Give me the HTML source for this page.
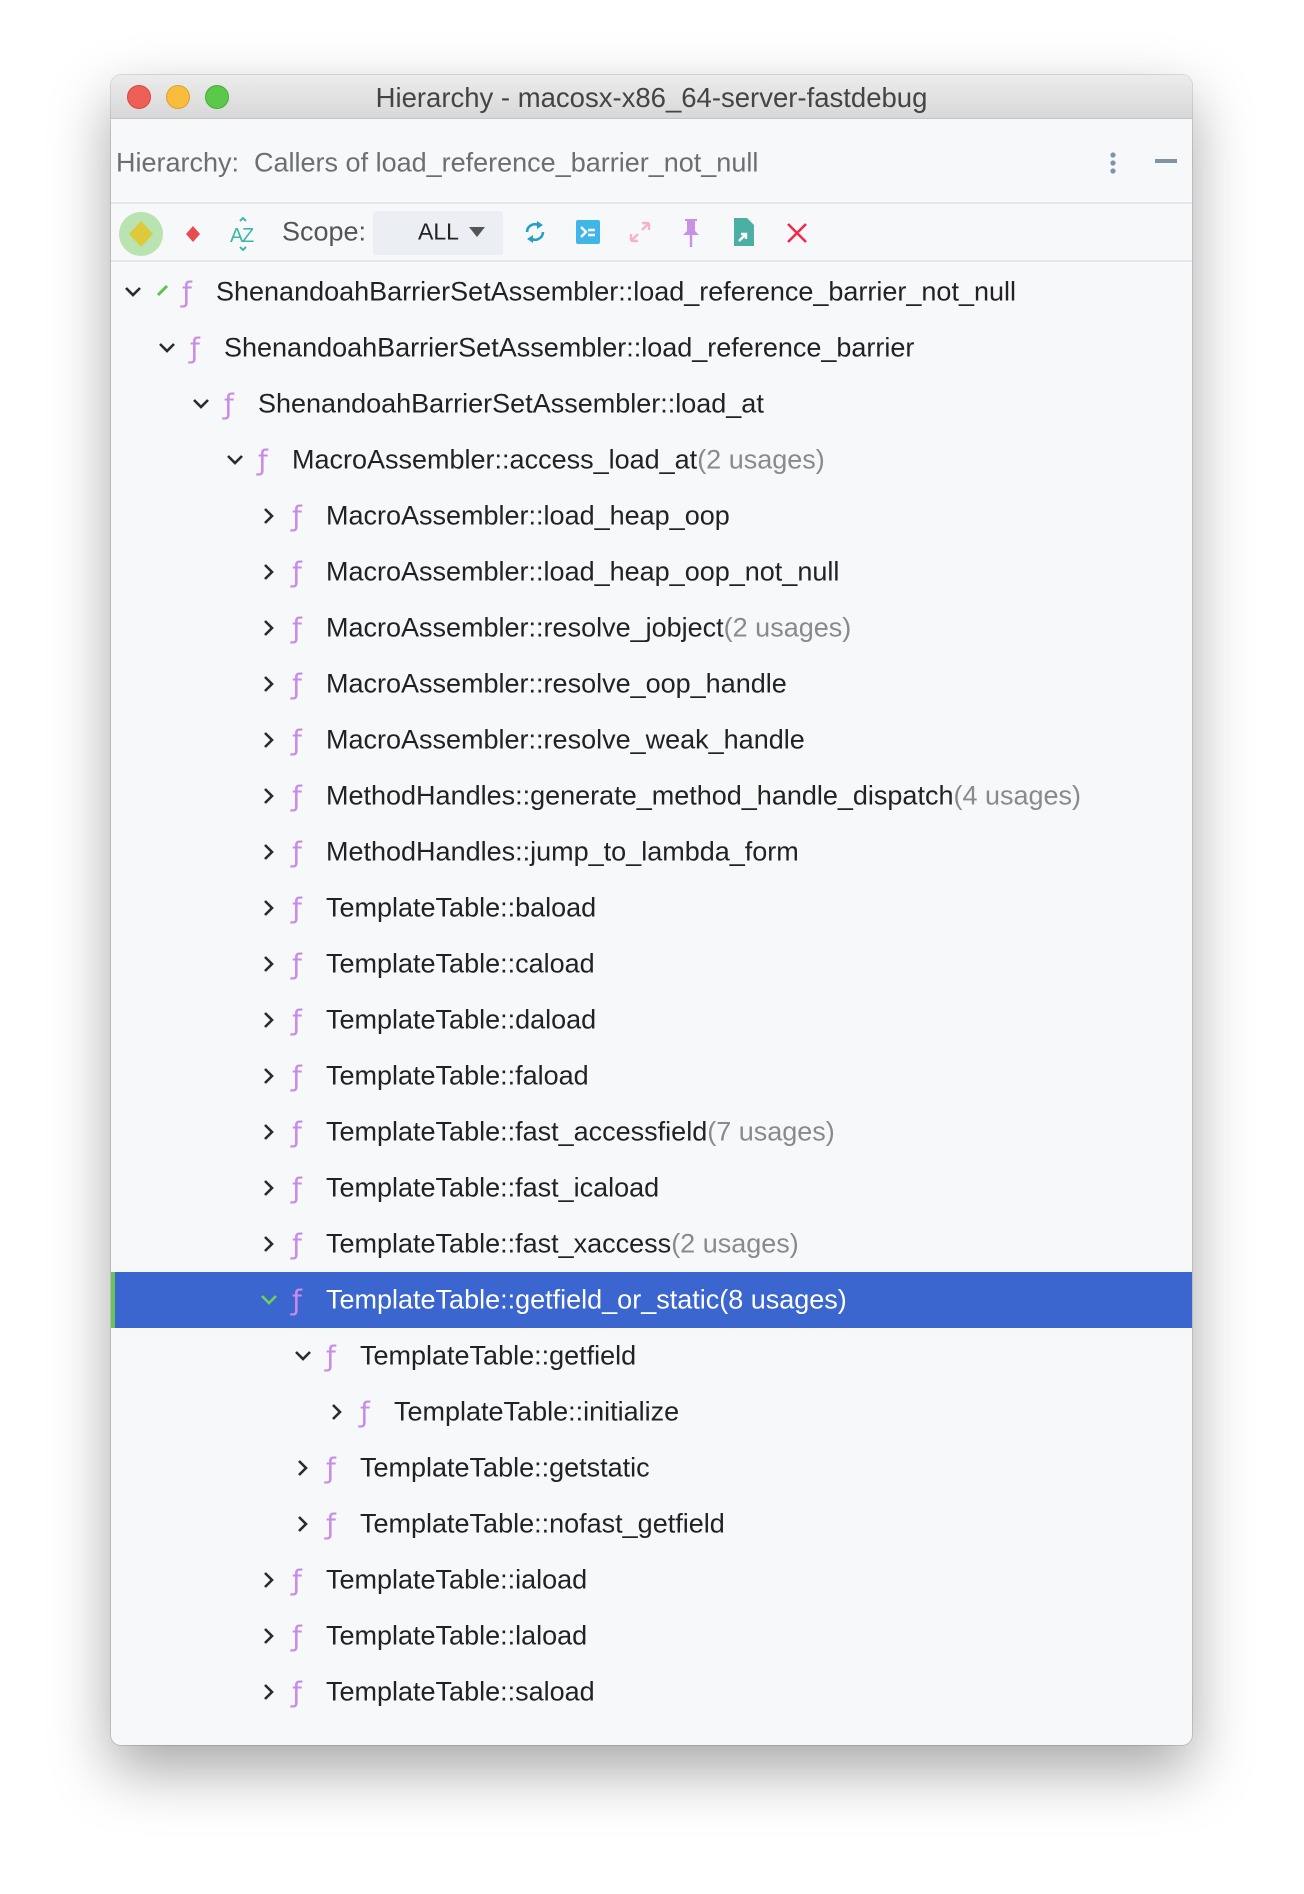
<!DOCTYPE html>
<html><head><meta charset="utf-8"><style>
*{margin:0;padding:0;box-sizing:border-box}
body{width:1304px;height:1894px;background:#fff;position:relative;font-family:"Liberation Sans",sans-serif;overflow:hidden}
.win{position:absolute;left:111px;top:75px;width:1081px;height:1670px;background:#f7f8fa;border-radius:10px;overflow:hidden;box-shadow:0 25px 60px rgba(0,0,0,.35),0 0 0 1px rgba(0,0,0,.12)}
.title{position:absolute;left:0;top:0;width:100%;height:44px;background:linear-gradient(#ececec,#d8d8d8);border-bottom:1px solid #c4c4c4;text-align:center;font-size:27.5px;line-height:46px;color:#444}
.dot{position:absolute;top:10px;width:24px;height:24px;border-radius:50%}
.hdr{position:absolute;left:5px;top:88px;font-size:27px;color:#6e6e6e;transform:translateY(-50%);white-space:nowrap}
.sep{position:absolute;left:0;width:100%;height:2px;background:#e6e7ea}
.row{position:absolute;left:0;width:100%;height:56px}
.row .t{position:absolute;top:50%;transform:translateY(-50%);font-size:27px;color:#222;white-space:nowrap}
.row .u{color:#8a8a8a}
.row .f{position:absolute;top:50%;transform:translateY(-50%);font-family:"DejaVu Sans",sans-serif;font-size:28px;color:#c98be8}
.row svg.c{position:absolute;top:50%;margin-top:-8px}
.sel{background:#3b66d0}
.sel .t{color:#fff}
.ic{position:absolute;top:157px}
</style></head><body>
<div class="win">
<div class="title">Hierarchy - macosx-x86_64-server-fastdebug
<div class="dot" style="left:16px;background:#ee5f58;border:1px solid #d4473f"></div>
<div class="dot" style="left:55px;background:#f8bd3c;border:1px solid #dca22b"></div>
<div class="dot" style="left:94px;background:#5ac84b;border:1px solid #45ad37"></div>
</div>
<div class="hdr">Hierarchy:&nbsp; Callers of load_reference_barrier_not_null</div>
<svg style="position:absolute;left:995px;top:76px" width="14" height="24"><circle cx="7" cy="4" r="2.6" fill="#7f95a6"/><circle cx="7" cy="12" r="2.6" fill="#7f95a6"/><circle cx="7" cy="20" r="2.6" fill="#7f95a6"/></svg>
<div style="position:absolute;left:1044px;top:84px;width:22px;height:4px;background:#7f95a6"></div>
<div class="sep" style="top:127px"></div>
<svg class="ic" style="left:6px;top:135px" width="48" height="48"><circle cx="24" cy="24" r="22" fill="#b9e3b0"/><path d="M24 11 L36 24 L24 37 L12 24Z" fill="#dcca3a"/></svg>
<svg class="ic" style="left:72px;top:149px" width="20" height="20"><path d="M10 2L17 10L10 18L3 10Z" fill="#e84b4b"/></svg>
<svg class="ic" style="left:118px;top:142px" width="30" height="34"><text x="1" y="25" font-family="Liberation Sans" font-size="20" fill="#3fb6a8">A</text><text x="13" y="25" font-family="Liberation Sans" font-size="20" fill="#3fb6a8">Z</text><path d="M11 4l3-3 3 3M11 30l3 3 3-3" stroke="#3fb6a8" fill="none" stroke-width="2"/></svg>
<div style="position:absolute;left:171px;top:157px;font-size:27px;color:#555;transform:translateY(-50%)">Scope:</div>
<div style="position:absolute;left:262px;top:136px;width:130px;height:44px;background:#ebeef2;border-radius:3px"></div>
<div style="position:absolute;left:307px;top:157px;font-size:23px;color:#222;transform:translateY(-50%)">ALL</div>
<svg style="position:absolute;left:357px;top:151px" width="18" height="12"><path d="M1 1H17L9 11Z" fill="#555"/></svg>
<svg style="position:absolute;left:411px;top:142px" width="26" height="30"><path d="M5 15a8 8 0 0 1 13-6" stroke="#27a0c9" stroke-width="2.6" fill="none"/><path d="M21 15a8 8 0 0 1-13 6" stroke="#27a0c9" stroke-width="2.6" fill="none"/><path d="M15 4l6 4-6 4Z M11 26l-6-4 6-4Z" fill="#27a0c9"/></svg>
<svg style="position:absolute;left:465px;top:145px" width="24" height="24"><rect width="24" height="24" rx="2" fill="#40b6e8"/><path d="M5 7l5 5-5 5" stroke="#fff" stroke-width="2.4" fill="none"/><path d="M12 10h7M12 15h7" stroke="#fff" stroke-width="2.4"/></svg>
<svg style="position:absolute;left:517px;top:145px" width="24" height="24"><path d="M3 21l7-7M21 3l-7 7M3 21v-7M3 21h7M21 3v7M21 3h-7" stroke="#f4b4c8" stroke-width="2.4" fill="none"/></svg>
<svg style="position:absolute;left:570px;top:142px" width="20" height="32"><path d="M4 2h12v2h-2v10l4 4H2l4-4V4H4Z" fill="#c990e6"/><path d="M10 18v12" stroke="#c990e6" stroke-width="2.4"/></svg>
<svg style="position:absolute;left:622px;top:142px" width="22" height="30"><path d="M1 1h13l7 7v21H1Z" fill="#4bb0a3"/><path d="M6 24l7-7M8 17h5v5" stroke="#fff" stroke-width="2.4" fill="none"/></svg>
<svg style="position:absolute;left:675px;top:147px" width="22" height="22"><path d="M2 2l18 18M20 2L2 20" stroke="#ee2a4e" stroke-width="2.6"/></svg>
<div class="sep" style="top:185px"></div>
<div id="rows"></div>
</div>
<script>
var R=[
[0,"ShenandoahBarrierSetAssembler::load_reference_barrier_not_null","",'d'],
[1,"ShenandoahBarrierSetAssembler::load_reference_barrier","",'d'],
[2,"ShenandoahBarrierSetAssembler::load_at","",'d'],
[3,"MacroAssembler::access_load_at","(2 usages)",'d'],
[4,"MacroAssembler::load_heap_oop","",'r'],
[4,"MacroAssembler::load_heap_oop_not_null","",'r'],
[4,"MacroAssembler::resolve_jobject","(2 usages)",'r'],
[4,"MacroAssembler::resolve_oop_handle","",'r'],
[4,"MacroAssembler::resolve_weak_handle","",'r'],
[4,"MethodHandles::generate_method_handle_dispatch","(4 usages)",'r'],
[4,"MethodHandles::jump_to_lambda_form","",'r'],
[4,"TemplateTable::baload","",'r'],
[4,"TemplateTable::caload","",'r'],
[4,"TemplateTable::daload","",'r'],
[4,"TemplateTable::faload","",'r'],
[4,"TemplateTable::fast_accessfield","(7 usages)",'r'],
[4,"TemplateTable::fast_icaload","",'r'],
[4,"TemplateTable::fast_xaccess","(2 usages)",'r'],
[4,"TemplateTable::getfield_or_static","(8 usages)",'d',1],
[5,"TemplateTable::getfield","",'d'],
[6,"TemplateTable::initialize","",'r'],
[5,"TemplateTable::getstatic","",'r'],
[5,"TemplateTable::nofast_getfield","",'r'],
[4,"TemplateTable::iaload","",'r'],
[4,"TemplateTable::laload","",'r'],
[4,"TemplateTable::saload","",'r']];
var h="";
R.forEach(function(r,i){
 var top=264-75+56*i;
 var tx=r[0]==0?105:113+34*(r[0]-1);
 var sel=r[4];
 var col=sel?'#6fd05a':'#2b2b2b';
 var cx=r[0]==0?15:tx-64;
 var ch=r[3]=='d'?'<svg class="c" style="left:'+(cx-2)+'px" width="18" height="16"><path d="M2 4l7 7 7-7" stroke="'+col+'" stroke-width="2.6" fill="none"/></svg>'
  :'<svg class="c" style="left:'+cx+'px" width="14" height="16"><path d="M3 1l7 7-7 7" stroke="'+col+'" stroke-width="2.6" fill="none"/></svg>';
 h+='<div class="row'+(sel?' sel':'')+'" style="top:'+top+'px">'+(sel?'<div style="position:absolute;left:0;top:0;width:4px;height:56px;background:#6ac259"></div>':'')+ch+
 (r[0]==0?'<svg style="position:absolute;left:45px;top:19px" width="14" height="14"><path d="M2 12l9-9" stroke="#5cc24a" stroke-width="3"/></svg>':'')+
 '<span class="f" style="left:'+(tx-34)+'px">ƒ</span><span class="t" style="left:'+tx+'px">'+r[1]+'<span class="u"'+(sel?' style="color:#fff"':'')+'>'+r[2]+'</span></span></div>';
});
document.getElementById('rows').innerHTML=h;
</script>
</body></html>
